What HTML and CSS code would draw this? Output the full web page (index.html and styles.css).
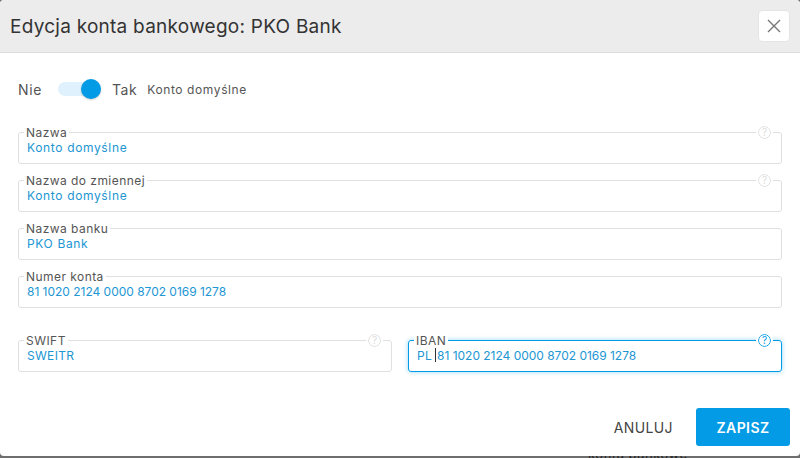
FILE: index.html
```html
<!DOCTYPE html>
<html lang="pl">
<head>
    <meta charset="UTF-8">
    <meta name="viewport" content="width=device-width, initial-scale=1.0">
    <title>Edycja konta bankowego</title>
    <link rel="stylesheet" href="styles.css">
</head>
<body class="page">
    <div class="backdrop-text">konta bankowe</div>
    <div class="dialog">
        <div class="dialog-header">
            <h1 class="dialog-title">Edycja konta bankowego: PKO Bank</h1>
            <button class="close-button" aria-label="Zamknij">
                <svg width="14" height="14" viewBox="0 0 14 14"><path d="M1 1 L13 13 M13 1 L1 13" stroke="#777" stroke-width="1.4" fill="none"/></svg>
            </button>
        </div>
        <div class="dialog-body">
            <div class="switch-row">
                <span class="switch-label">Nie</span>
                <span class="switch"><span class="switch-knob"></span></span>
                <span class="switch-label">Tak</span>
                <span class="switch-text">Konto domyślne</span>
            </div>
            <div class="fields">
                <div class="field">
                    <span class="field-label">Nazwa</span>
                    <span class="field-help">?</span>
                    <div class="field-value">Konto domyślne</div>
                </div>
                <div class="field">
                    <span class="field-label">Nazwa do zmiennej</span>
                    <span class="field-help">?</span>
                    <div class="field-value">Konto domyślne</div>
                </div>
                <div class="field">
                    <span class="field-label">Nazwa banku</span>
                    <div class="field-value">PKO Bank</div>
                </div>
                <div class="field">
                    <span class="field-label">Numer konta</span>
                    <div class="field-value"><span class="digits">81 1020 2124 0000 8702 0169 1278</span></div>
                </div>
            </div>
            <div class="fields-row">
                <div class="field">
                    <span class="field-label">SWIFT</span>
                    <span class="field-help">?</span>
                    <div class="field-value field-code">SWEITR</div>
                </div>
                <div class="field field-focus">
                    <span class="field-label">IBAN</span>
                    <span class="field-help">?</span>
                    <div class="field-value field-code">PL<span class="caret"></span><span class="digits">81 1020 2124 0000 8702 0169 1278</span></div>
                </div>
            </div>
        </div>
        <div class="dialog-footer">
            <button class="button-text">ANULUJ</button>
            <button class="button-primary">ZAPISZ</button>
        </div>
    </div>
</body>
</html>
```

FILE: styles.css
```css
.page {
    margin: 0;
    height: 458px;
    overflow: hidden;
    background-color: #6e6e6e;
    font-family: "Inter", "Noto Sans", sans-serif;
    color: #444;
    position: relative;
}

.backdrop-text {
    position: absolute;
    left: 588px;
    top: 446px;
    font-size: 13px;
    letter-spacing: 0.5px;
    color: #222;
}

.dialog {
    position: relative;
    width: 800px;
    height: 456px;
    background-color: #fff;
    border-radius: 4px;
    overflow: hidden;
}

.dialog-header {
    display: flex;
    justify-content: space-between;
    align-items: center;
    height: 52px;
    padding: 0 10px;
    background-color: #ececec;
    border-bottom: 1px solid #dcdcdc;
}

.dialog-title {
    margin: 0;
    font-size: 19px;
    font-weight: 400;
    letter-spacing: 0.25px;
    color: #333;
}

.close-button {
    display: flex;
    justify-content: center;
    align-items: center;
    width: 32px;
    height: 32px;
    padding: 0;
    background-color: #fff;
    border: 1px solid #e4e4e4;
    border-radius: 4px;
}

.dialog-body {
    padding: 0 18px;
}

.switch-row {
    display: flex;
    align-items: center;
    height: 24px;
    margin-top: 24px;
}

.switch-label {
    font-size: 14px;
    letter-spacing: 0.6px;
    color: #555;
}

.switch {
    position: relative;
    width: 42px;
    height: 14px;
    margin: 0 12px 0 16px;
    background-color: #dff1fc;
    border-radius: 7px;
}

.switch-knob {
    position: absolute;
    top: -3px;
    right: -1px;
    width: 20px;
    height: 20px;
    background-color: #039be5;
    border-radius: 50%;
    box-shadow: 0 1px 2px rgba(0, 0, 0, 0.2);
}

.switch-text {
    margin-left: 10px;
    font-size: 12px;
    letter-spacing: 0.6px;
    color: #555;
}

.fields {
    display: flex;
    flex-direction: column;
    gap: 16px;
    margin-top: 31px;
}

.fields-row {
    display: grid;
    grid-template-columns: 1fr 1fr;
    gap: 16px;
    margin-top: 32px;
}

.field {
    position: relative;
    height: 32px;
    box-sizing: border-box;
    border: 1px solid #e0e0e0;
    border-radius: 3px;
}

.field-label {
    position: absolute;
    left: 5px;
    top: -7px;
    padding: 0 2px;
    background-color: #fff;
    font-size: 12px;
    line-height: 14px;
    letter-spacing: 0.45px;
    color: #555;
}

.field-help {
    position: absolute;
    right: 10px;
    top: -7px;
    width: 11px;
    height: 11px;
    border: 1px solid #ddd;
    border-radius: 50%;
    outline: 2px solid #fff;
    background-color: #fff;
    font-size: 10px;
    line-height: 11px;
    text-align: center;
    color: #ddd;
}

.field-value {
    padding: 6px 8px 0;
    font-size: 12px;
    line-height: 18px;
    letter-spacing: 0.65px;
    color: #2196d3;
}

.field-code {
    letter-spacing: 0.3px;
}

.digits {
    letter-spacing: -0.02px;
}

.field-focus {
    border-color: #039be5;
    box-shadow: 0 0 5px rgba(3, 155, 229, 0.4);
}

.field-focus .field-help {
    border-color: #039be5;
    color: #039be5;
}

.caret {
    display: inline-block;
    width: 1px;
    height: 14px;
    margin: 0 1px 0 3px;
    vertical-align: -2px;
    background-color: #333;
}

.dialog-footer {
    display: flex;
    justify-content: flex-end;
    align-items: center;
    gap: 23px;
    margin-top: 36px;
    padding-right: 10px;
}

.button-text {
    padding: 0;
    background: none;
    border: none;
    font-family: inherit;
    font-size: 14px;
    letter-spacing: 0.4px;
    color: #444;
}

.button-primary {
    width: 94px;
    height: 38px;
    background-color: #039be5;
    border: none;
    border-radius: 3px;
    font-family: inherit;
    font-size: 14px;
    font-weight: 600;
    letter-spacing: 0.4px;
    color: #fff;
}
```
